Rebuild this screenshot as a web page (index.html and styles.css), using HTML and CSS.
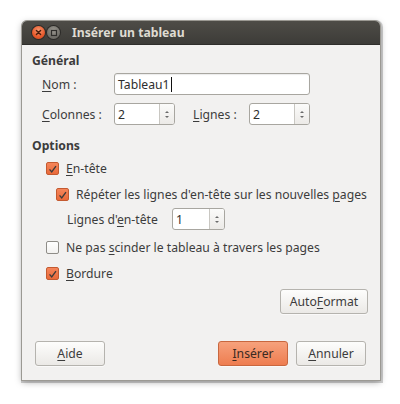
FILE: index.html
```html
<!DOCTYPE html>
<html lang="fr">
<head>
<meta charset="utf-8">
<title>Insérer un tableau</title>
<link rel="stylesheet" href="styles.css">
</head>
<body>
<div class="window">
  <div class="titlebar">
    <span class="wbtn close"><svg width="13" height="13" viewBox="0 0 13 13"><path d="M4.4 4.4 L8.6 8.6 M8.6 4.4 L4.4 8.6" stroke="#4a1d0c" stroke-width="1.4" stroke-linecap="round"/></svg></span>
    <span class="wbtn mini"><svg width="12" height="12" viewBox="0 0 12 12"><rect x="3.5" y="3.5" width="5" height="5" fill="none" stroke="#2f2e2b" stroke-width="1.2"/></svg></span>
    <span class="title">Insérer un tableau</span>
  </div>
  <div class="content">
    <div class="heading">Général</div>
    <div class="row row-nom">
      <span class="label lbl-nom"><u>N</u>om :</span>
      <div class="entry wide"><span class="val">Tableau1</span><span class="caret"></span></div>
    </div>
    <div class="row row-cols">
      <span class="label lbl-nom"><u>C</u>olonnes :</span>
      <div class="spin s-cols"><span class="val">2</span><span class="spinbtn"><i class="up"></i><i class="down"></i></span></div>
      <span class="label lbl-lig"><u>L</u>ignes :</span>
      <div class="spin s-lig"><span class="val">2</span><span class="spinbtn"><i class="up"></i><i class="down"></i></span></div>
    </div>

    <div class="heading h-opt">Options</div>
    <div class="check l1 c-entete"><span class="box on"><svg width="13" height="13" viewBox="0 0 13 13"><path d="M3 6.3 L5.6 9.4 L10.6 2.6" fill="none" stroke="#3b3b3b" stroke-width="1.6"/></svg></span><span><u>E</u>n-tête</span></div>
    <div class="check l2 c-rep"><span class="box on"><svg width="13" height="13" viewBox="0 0 13 13"><path d="M3 6.3 L5.6 9.4 L10.6 2.6" fill="none" stroke="#3b3b3b" stroke-width="1.6"/></svg></span><span>Répéter les lignes d'en-tête sur les nouvelles <u>p</u>ages</span></div>
    <div class="row row-lh">
      <span class="label lbl-lh">Lignes d'<u>e</u>n-tête</span>
      <div class="spin s-lh"><span class="val">1</span><span class="spinbtn"><i class="up"></i><i class="down"></i></span></div>
    </div>
    <div class="check l1 c-np"><span class="box"></span><span>Ne pas <u>s</u>cinder le tableau à travers les pages</span></div>
    <div class="check l1 c-bord"><span class="box on"><svg width="13" height="13" viewBox="0 0 13 13"><path d="M3 6.3 L5.6 9.4 L10.6 2.6" fill="none" stroke="#3b3b3b" stroke-width="1.6"/></svg></span><span><u>B</u>ordure</span></div>

    <div class="af-row"><button class="btn af">Auto<u>F</u>ormat</button></div>

    <div class="bottom">
      <button class="btn b-aide"><u>A</u>ide</button>
      <span class="spacer"></span>
      <button class="btn primary b-ins"><u>I</u>nsérer</button>
      <button class="btn b-ann"><u>A</u>nnuler</button>
    </div>
  </div>
</div>
</body>
</html>
```
FILE: styles.css
```css
html, body {
  margin: 0;
  padding: 0;
  background: #ffffff;
}
body {
  width: 400px;
  height: 404px;
  overflow: hidden;
  font-family: "Noto Sans", "DejaVu Sans", sans-serif;
  font-size: 12.2px;
  color: #3c3c3c;
}
u { text-decoration: underline; text-underline-offset: 2px; text-decoration-thickness: 1px; }

.window {
  margin: 21px 0 0 22px;
  width: 358px;
  height: 359px;
  background: #f2f1f0;
  border-radius: 5px 5px 0 0;
  box-shadow: 0 0 0 1px #9b9993, 1px 1px 0 2px rgba(0,0,0,0.18), 0 2px 7px rgba(0,0,0,0.35);
  display: flex;
  flex-direction: column;
}
.titlebar {
  height: 24px;
  background: linear-gradient(#4e4c47, #3d3c38);
  border-radius: 5px 5px 0 0;
  border-bottom: 1px solid #2f2e2b;
  box-sizing: border-box;
  display: flex;
  align-items: center;
  padding-left: 10px;
}
.wbtn {
  width: 13px;
  height: 13px;
  border-radius: 50%;
  display: flex;
  align-items: center;
  justify-content: center;
}
.close {
  background: radial-gradient(circle at 50% 35%, #f79a72, #e8582a 60%, #c4441c);
  box-shadow: 0 0 0 1px #2c2b28;
}
.mini {
  margin-left: 2px;
  background: radial-gradient(circle at 50% 35%, #9a978f, #6e6c66 70%, #5b5954);
  box-shadow: 0 0 0 1px #2c2b28;
}
.title {
  margin-left: 12px;
  color: #dfdbd2;
  font-weight: bold;
  font-size: 12.2px;
}
.content {
  flex: 1;
  display: flex;
  flex-direction: column;
  padding: 8px 12px 14px 10px;
}
.heading {
  font-weight: bold;
  height: 16px;
  line-height: 16px;
}
.h-opt { margin-top: 13px; }
.row {
  display: flex;
  align-items: center;
  height: 22px;
}
.row-nom { margin-top: 4px; margin-left: 10px; }
.row-cols { margin-top: 8px; margin-left: 10px; }
.label { white-space: nowrap; }
.lbl-nom { width: 72px; }
.lbl-lig { margin-left: 18px; width: 56px; }
.entry {
  height: 22px;
  box-sizing: border-box;
  background: #fff;
  border: 1px solid #a8a6a0;
  border-radius: 3px;
  box-shadow: inset 0 1px 1px rgba(0,0,0,0.08);
  display: flex;
  align-items: center;
  padding-left: 3px;
  color: #2e2e2e;
}
.wide { width: 196px; }
.caret {
  width: 1px;
  height: 15px;
  background: #111;
  margin-left: 1px;
}
.spin {
  height: 22px;
  box-sizing: border-box;
  display: flex;
  border: 1px solid #a8a6a0;
  border-radius: 3px;
  overflow: hidden;
  background: #fff;
}
.spin .val {
  flex: 1;
  display: flex;
  align-items: center;
  padding-left: 3px;
  color: #2e2e2e;
}
.s-cols { width: 61px; }
.s-lig { width: 61px; }
.s-lh { width: 53px; }
.spinbtn {
  width: 14px;
  border-left: 1px solid #c9c7c2;
  background: linear-gradient(#fbfbfa, #eceae7);
  display: flex;
  flex-direction: column;
  align-items: center;
  justify-content: center;
  gap: 3px;
}
.spinbtn i {
  display: block;
  width: 0;
  height: 0;
  border-left: 2px solid transparent;
  border-right: 2px solid transparent;
}
.spinbtn .up { border-bottom: 2px solid #6a6a6a; }
.spinbtn .down { border-top: 2px solid #6a6a6a; }

.check {
  display: flex;
  align-items: center;
  height: 20px;
  white-space: nowrap;
}
.check .box {
  width: 13px;
  height: 13px;
  box-sizing: border-box;
  border: 1px solid #8f8d88;
  border-radius: 2px;
  background: linear-gradient(#ffffff, #f3f2f0);
  margin-right: 7px;
  display: flex;
  flex: none;
}
.check .box.on {
  border-color: #c45a30;
  background: linear-gradient(#f5855a, #e96a3a);
}
.l1 { margin-left: 14px; }
.l2 { margin-left: 24px; }
.c-entete { margin-top: 4px; }
.c-rep { margin-top: 6px; }
.row-lh { margin-top: 4px; margin-left: 35px; }
.lbl-lh { width: 105px; }
.c-np { margin-top: 7px; }
.c-bord { margin-top: 6px; }

.af-row {
  display: flex;
  justify-content: flex-end;
  margin-top: 6px;
}
.btn {
  font-family: inherit;
  font-size: 12.2px;
  color: #3c3c3c;
  height: 25px;
  box-sizing: border-box;
  border: 1px solid #b5b3ae;
  border-radius: 3px;
  background: linear-gradient(#fdfdfc, #ebe9e6);
  box-shadow: 0 1px 0 rgba(255,255,255,0.6);
  padding: 0;
  margin: 0;
}
.af { width: 88px; }
.bottom {
  margin-top: auto;
  display: flex;
  align-items: center;
  padding-left: 3px;
  padding-right: 2px;
}
.spacer { flex: 1; }
.b-aide { width: 70px; }
.b-ins { width: 70px; }
.b-ann { width: 70px; margin-left: 8px; }
.primary {
  border-color: #c8673f;
  background: linear-gradient(#f6a17c, #ee7d50);
  color: #3a2a22;
}
```
